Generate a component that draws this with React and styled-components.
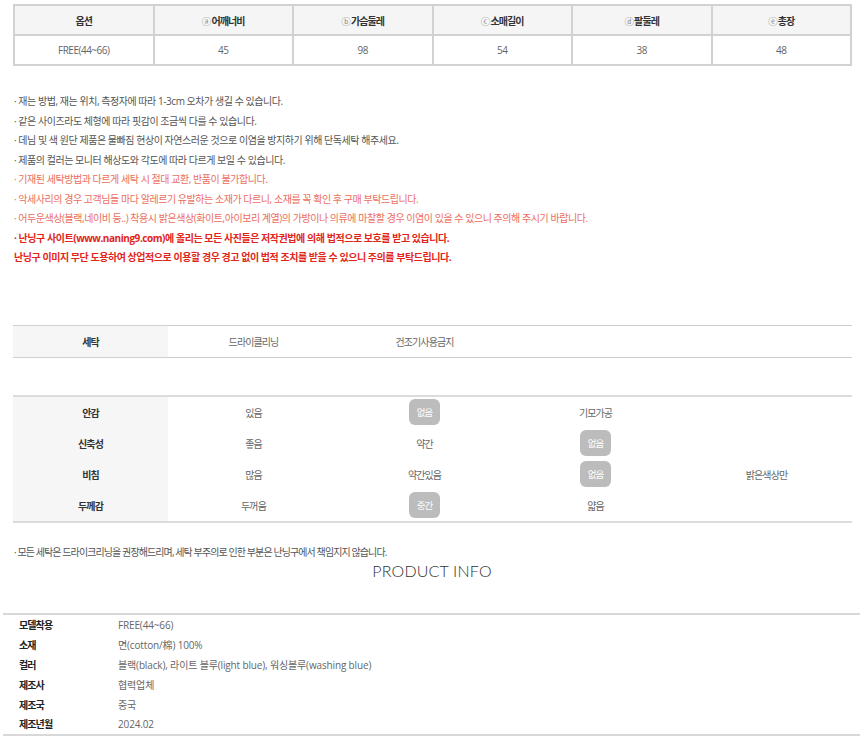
import React from "react";
import styled, { createGlobalStyle } from "styled-components";

const GlobalStyle = createGlobalStyle`
  body {
    margin: 0;
    background: #fff;
    font-family: "Open Sans", "Noto Sans CJK KR", sans-serif;
    font-size: 10px;
    letter-spacing: -0.9px;
    color: #555;
  }
`;

const Page = styled.div`
  width: 860px;
  padding-top: 4px;
`;

const SizeTable = styled.table`
  margin-left: 13px;
  width: 839px;
  border-collapse: collapse;
  table-layout: fixed;
  border: 2px solid #d2d2d2;
`;

const Th = styled.th`
  height: 28px;
  padding: 0;
  background: #f5f5f5;
  border: 2px solid #d2d2d2;
  color: #333;
  font-weight: 700;
`;

const Circle = styled.span`
  color: #888;
  font-weight: 400;
  font-size: 9.5px;
  margin-right: 1px;
`;

const Td = styled.td`
  height: 28px;
  padding: 0;
  text-align: center;
  border: 2px solid #d2d2d2;
  color: #666;
  letter-spacing: -0.5px;
`;

const Notes = styled.ul`
  list-style: none;
  margin: 26px 0 0 14px;
  padding: 0;
  letter-spacing: -0.45px;
`;

const Note = styled.li`
  line-height: 19.5px;
  height: 19.5px;
  white-space: nowrap;
  color: ${(p) => (p.tone === "warn" ? "#ec6d5e" : p.tone === "alert" ? "#e2251a" : "#555")};
  font-weight: ${(p) => (p.tone === "alert" ? 700 : 400)};
`;

const Grid = styled.div`
  margin-left: 13px;
  width: 839px;
  display: grid;
  grid-template-columns: 155px repeat(4, 1fr);
  grid-auto-rows: ${(p) => p.rowHeight}px;
  border-top: ${(p) => p.edge};
  border-bottom: ${(p) => p.edge};
  margin-top: ${(p) => p.top}px;
`;

const Label = styled.div`
  background: #f6f6f6;
  display: flex;
  align-items: center;
  justify-content: center;
  font-weight: 700;
  color: #333;
`;

const Cell = styled.div`
  display: flex;
  align-items: center;
  justify-content: center;
  color: #666;
`;

const Pill = styled.span`
  display: inline-flex;
  align-items: center;
  justify-content: center;
  width: 31px;
  height: 26px;
  border-radius: 6px;
  background: #bcbcbc;
  color: #fff;
  font-size: 9.5px;
`;

const FootNote = styled.p`
  margin: 20px 0 0 14px;
  line-height: 19.5px;
  color: #555;
`;

const Heading = styled.h2`
  margin: 0;
  text-align: center;
  font-family: Lato, "Open Sans", sans-serif;
  font-weight: 300;
  font-size: 16px;
  letter-spacing: 0.2px;
  line-height: 18px;
  color: #333;
  padding-left: 4px;
`;

const InfoTable = styled.div`
  margin: 33px 0 0 3px;
  width: 855px;
  border-top: 2px solid #d8d8d8;
  border-bottom: 2px solid #d8d8d8;
  padding: 0 0 0 16px;
  display: grid;
  grid-template-columns: 99px 1fr;
  grid-auto-rows: 19.8px;
  align-items: center;
`;

const InfoKey = styled.div`
  font-weight: 700;
  color: #222;
`;

const InfoValue = styled.div`
  color: #666;
  letter-spacing: -0.15px;
`;

const sizeHead = [
  ["", "옵션"],
  ["ⓐ", "어깨너비"],
  ["ⓑ", "가슴둘레"],
  ["ⓒ", "소매길이"],
  ["ⓓ", "팔둘레"],
  ["ⓔ", "총장"],
];
const sizeRow = ["FREE(44~66)", "45", "98", "54", "38", "48"];

const notes = [
  ["", "· 재는 방법, 재는 위치, 측정자에 따라 1-3cm 오차가 생길 수 있습니다."],
  ["", "· 같은 사이즈라도 체형에 따라 핏감이 조금씩 다를 수 있습니다."],
  ["", "· 데님 및 색 원단 제품은 물빠짐 현상이 자연스러운 것으로 이염을 방지하기 위해 단독세탁 해주세요."],
  ["", "· 제품의 컬러는 모니터 해상도와 각도에 따라 다르게 보일 수 있습니다."],
  ["warn", "· 기재된 세탁방법과 다르게 세탁 시 절대 교환, 반품이 불가합니다."],
  ["warn", "· 악세사리의 경우 고객님들 마다 알레르기 유발하는 소재가 다르니, 소재를 꼭 확인 후 구매 부탁드립니다."],
  ["warn", "· 어두운색상(블랙,네이비 등..) 착용시 밝은색상(화이트,아이보리 계열)의 가방이나 의류에 마찰할 경우 이염이 있을 수 있으니 주의해 주시기 바랍니다."],
  ["alert", "· 난닝구 사이트(www.naning9.com)에 올리는 모든 사진들은 저작권법에 의해 법적으로 보호를 받고 있습니다."],
  ["alert", "난닝구 이미지 무단 도용하여 상업적으로 이용할 경우 경고 없이 법적 조치를 받을 수 있으니 주의를 부탁드립니다."],
];

// selected = index of the highlighted option
const fabric = [
  ["안감", ["있음", "없음", "기모가공", ""], 1],
  ["신축성", ["좋음", "약간", "없음", ""], 2],
  ["비침", ["많음", "약간있음", "없음", "밝은색상만"], 2],
  ["두께감", ["두꺼움", "중간", "얇음", ""], 1],
];

const info = [
  ["모델착용", "FREE(44~66)"],
  ["소재", "면(cotton/棉) 100%"],
  ["컬러", "블랙(black), 라이트 블루(light blue), 워싱블루(washing blue)"],
  ["제조사", "협력업체"],
  ["제조국", "중국"],
  ["제조년월", "2024.02"],
];

export default function App() {
  return (
    <Page>
      <GlobalStyle />
      <SizeTable>
        <thead>
          <tr>
            {sizeHead.map(([c, t], i) => (
              <Th key={i}>
                {c && <Circle>{c}</Circle>}
                {t}
              </Th>
            ))}
          </tr>
        </thead>
        <tbody>
          <tr>
            {sizeRow.map((v, i) => (
              <Td key={i}>{v}</Td>
            ))}
          </tr>
        </tbody>
      </SizeTable>

      <Notes>
        {notes.map(([tone, text], i) => (
          <Note key={i} tone={tone}>
            {text}
          </Note>
        ))}
      </Notes>

      <Grid rowHeight={31} top={57} edge="1px solid #cfcfcf">
        <Label>세탁</Label>
        <Cell>드라이클리닝</Cell>
        <Cell>건조기사용금지</Cell>
        <Cell />
        <Cell />
      </Grid>

      <Grid rowHeight={31} top={37} edge="2px solid #dcdcdc">
        {fabric.map(([label, opts, sel]) => (
          <React.Fragment key={label}>
            <Label>{label}</Label>
            {opts.map((o, i) => (
              <Cell key={i}>{i === sel ? <Pill>{o}</Pill> : o}</Cell>
            ))}
          </React.Fragment>
        ))}
      </Grid>

      <FootNote>· 모든 세탁은 드라이크리닝을 권장해드리며, 세탁 부주의로 인한 부분은 난닝구에서 책임지지 않습니다.</FootNote>
      <Heading>PRODUCT INFO</Heading>

      <InfoTable>
        {info.map(([k, v]) => (
          <React.Fragment key={k}>
            <InfoKey>{k}</InfoKey>
            <InfoValue>{v}</InfoValue>
          </React.Fragment>
        ))}
      </InfoTable>
    </Page>
  );
}
